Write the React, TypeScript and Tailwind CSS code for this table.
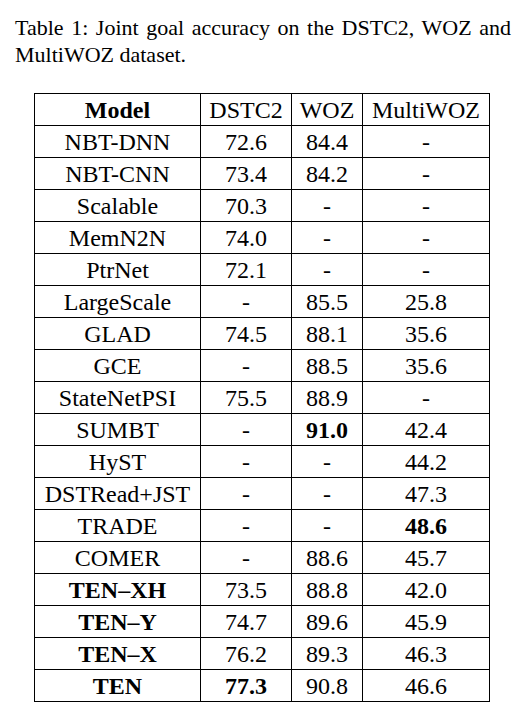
import React from "react";

type Cell = { t: string; b?: boolean };
type Row = [Cell, Cell, Cell, Cell];

const c = (t: string, b = false): Cell => ({ t, b });

const rows: Row[] = [
  [c("NBT-DNN"), c("72.6"), c("84.4"), c("-")],
  [c("NBT-CNN"), c("73.4"), c("84.2"), c("-")],
  [c("Scalable"), c("70.3"), c("-"), c("-")],
  [c("MemN2N"), c("74.0"), c("-"), c("-")],
  [c("PtrNet"), c("72.1"), c("-"), c("-")],
  [c("LargeScale"), c("-"), c("85.5"), c("25.8")],
  [c("GLAD"), c("74.5"), c("88.1"), c("35.6")],
  [c("GCE"), c("-"), c("88.5"), c("35.6")],
  [c("StateNetPSI"), c("75.5"), c("88.9"), c("-")],
  [c("SUMBT"), c("-"), c("91.0", true), c("42.4")],
  [c("HyST"), c("-"), c("-"), c("44.2")],
  [c("DSTRead+JST"), c("-"), c("-"), c("47.3")],
  [c("TRADE"), c("-"), c("-"), c("48.6", true)],
  [c("COMER"), c("-"), c("88.6"), c("45.7")],
  [c("TEN\u2013XH", true), c("73.5"), c("88.8"), c("42.0")],
  [c("TEN\u2013Y", true), c("74.7"), c("89.6"), c("45.9")],
  [c("TEN\u2013X", true), c("76.2"), c("89.3"), c("46.3")],
  [c("TEN", true), c("77.3", true), c("90.8"), c("46.6")],
];

const header: Row = [c("Model", true), c("DSTC2"), c("WOZ"), c("MultiWOZ")];

export default function App() {
  const all = [header, ...rows];
  return (
    <div
      className="w-[528px] h-[723px] bg-white text-black overflow-hidden font-['Liberation_Serif',serif]"
    >
      <div className="pt-[14px] pl-[15px] w-[511px] text-[22px] leading-[27px]">
        <div className="text-justify [text-align-last:justify]">
          Table 1: Joint goal accuracy on the DSTC2, WOZ and
        </div>
        <div>MultiWOZ dataset.</div>
      </div>
      <div className="mt-[25px] ml-[34px] w-fit border-l border-t border-black grid grid-cols-[166px_91px_71px_127px] text-[24px]">
        {all.map((r, i) =>
          r.map((cell, j) => (
            <div
              key={`${i}-${j}`}
              className={`h-[32px] border-r border-b border-black flex items-center justify-center leading-none ${
                cell.b ? "font-bold" : ""
              }`}
            >
              {cell.t}
            </div>
          ))
        )}
      </div>
    </div>
  );
}
